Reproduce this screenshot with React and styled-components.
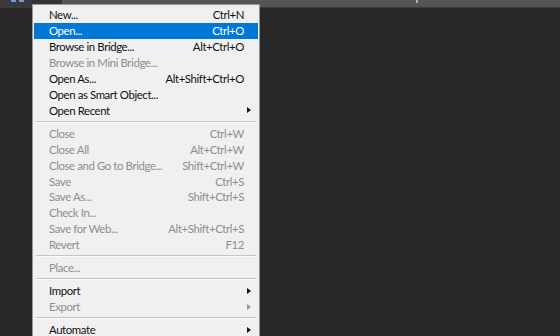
import React from "react";
import styled, { createGlobalStyle } from "styled-components";

const GlobalStyle = createGlobalStyle`
  html, body {
    margin: 0;
    padding: 0;
    background: #282828;
    overflow: hidden;
  }
`;

const Page = styled.div`
  position: relative;
  width: 560px;
  height: 336px;
  background: #282828;
  font-family: Lato, "Noto Sans", sans-serif;
`;

const TopBar = styled.div`
  display: flex;
  height: 7px;
  background: #555555;
  border-bottom: 1px solid #3b3b3b;
`;

const AppBadge = styled.div`
  width: 32px;
  background: #3a3a3a;
  display: flex;
  align-items: flex-start;
  justify-content: center;
  gap: 3px;
  padding-left: 2px;
  box-sizing: border-box;
`;

const BadgeMark = styled.span`
  width: 5px;
  height: 2px;
  background: #6f9fd1;
`;

const DocTab = styled.div`
  width: 30px;
  background: #333333;
`;

const TitleArea = styled.div`
  flex: 1;
  position: relative;
`;

const Tick = styled.span`
  position: absolute;
  left: 354px;
  top: 0;
  width: 2px;
  height: 3px;
  background: #9bb4cc;
`;

const Menu = styled.div`
  position: absolute;
  left: 32px;
  top: 4px;
  width: 228px;
  padding: 2px 1px 0 1px;
  box-sizing: border-box;
  background: #f0f0f0;
  border: 1px solid #979797;
  border-bottom: none;
  height: 332px;
  overflow: hidden;
  display: flex;
  flex-direction: column;
`;

const Item = styled.div`
  position: relative;
  display: flex;
  align-items: center;
  justify-content: space-between;
  flex: 0 0 auto;
  height: 15.9px;
  padding: 0 14px 0 15px;
  box-sizing: border-box;
  font-size: 11.4px;
  letter-spacing: -0.4px;
  white-space: nowrap;
  color: ${(p) => (p.$active ? "#ffffff" : p.$disabled ? "#8e8e8e" : "#111111")};
  background: ${(p) => (p.$active ? "#0078d7" : "transparent")};
`;

const Arrow = styled.span`
  position: absolute;
  right: 7px;
  top: 5px;
  width: 0;
  height: 0;
  border-top: 3.5px solid transparent;
  border-bottom: 3.5px solid transparent;
  border-left: 4px solid ${(p) => (p.$disabled ? "#9a9a9a" : "#111111")};
`;

const Separator = styled.div`
  flex: 0 0 auto;
  height: 7.2px;
  display: flex;
  align-items: center;
  padding: 0 2px;
  &::before {
    content: "";
    flex: 1;
    height: 1px;
    background: #c5c5c5;
    border-bottom: 1px solid #fbfbfb;
  }
`;

const groups = [
  [
    { label: "New...", key: "Ctrl+N" },
    { label: "Open...", key: "Ctrl+O", active: true },
    { label: "Browse in Bridge...", key: "Alt+Ctrl+O" },
    { label: "Browse in Mini Bridge...", disabled: true },
    { label: "Open As...", key: "Alt+Shift+Ctrl+O" },
    { label: "Open as Smart Object..." },
    { label: "Open Recent", sub: true },
  ],
  [
    { label: "Close", key: "Ctrl+W", disabled: true },
    { label: "Close All", key: "Alt+Ctrl+W", disabled: true },
    { label: "Close and Go to Bridge...", key: "Shift+Ctrl+W", disabled: true },
    { label: "Save", key: "Ctrl+S", disabled: true },
    { label: "Save As...", key: "Shift+Ctrl+S", disabled: true },
    { label: "Check In...", disabled: true },
    { label: "Save for Web...", key: "Alt+Shift+Ctrl+S", disabled: true },
    { label: "Revert", key: "F12", disabled: true },
  ],
  [{ label: "Place...", disabled: true }],
  [
    { label: "Import", sub: true },
    { label: "Export", sub: true, disabled: true },
  ],
  [{ label: "Automate", sub: true }],
];

const App = () => {
  return (
    <Page>
      <GlobalStyle />
      <TopBar>
        <AppBadge>
          <BadgeMark />
          <BadgeMark />
        </AppBadge>
        <DocTab />
        <TitleArea>
          <Tick />
        </TitleArea>
      </TopBar>
      <Menu>
        {groups.map((group, gi) => (
          <React.Fragment key={gi}>
            {gi > 0 && <Separator />}
            {group.map((it) => (
              <Item key={it.label} $active={it.active} $disabled={it.disabled}>
                <span>{it.label}</span>
                {it.key && <span>{it.key}</span>}
                {it.sub && <Arrow $disabled={it.disabled} />}
              </Item>
            ))}
          </React.Fragment>
        ))}
      </Menu>
    </Page>
  );
};

export default App;
